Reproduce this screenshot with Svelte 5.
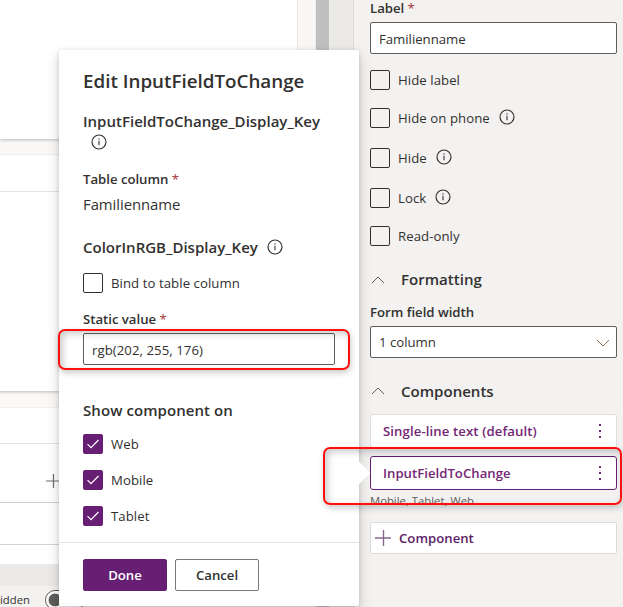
<script>
  const options = [
    { label: 'Hide label', top: 16 },
    { label: 'Hide on phone', info: true, top: 18 },
    { label: 'Hide', info: true, top: 20 },
    { label: 'Lock', info: true, top: 20 },
    { label: 'Read-only', top: 18 }
  ];
  const targets = ['Web', 'Mobile', 'Tablet'];
</script>

{#snippet info()}
  <svg class="info" width="16" height="16" viewBox="0 0 16 16">
    <circle cx="8" cy="8" r="7" fill="none" stroke="#323130" stroke-width="1.15" />
    <path d="M8 6.7V11.2" stroke="#323130" stroke-width="1.1" />
    <circle cx="8" cy="5" r=".7" fill="#323130" />
  </svg>
{/snippet}

{#snippet chevron()}
  <svg width="14" height="8" viewBox="0 0 14 8"><path d="M1 7 7 1l6 6" fill="none" stroke="#605e5c" stroke-width="1" /></svg>
{/snippet}

{#snippet dots()}
  <svg class="dots" width="4" height="16" viewBox="0 0 4 16" fill="#742774">
    <rect x="1" y="1" width="2" height="2" /><rect x="1" y="7" width="2" height="2" /><rect x="1" y="13" width="2" height="2" />
  </svg>
{/snippet}

<div class="screen">
  <div class="canvas">
    <div class="card first"></div>
    <div class="card second"><div class="head"></div></div>
    <div class="card third">
      <div class="head"></div>
      <div class="add">
        <svg width="14" height="14" viewBox="0 0 14 14"><path d="M0 7H14" stroke="#b8b6b4" stroke-width="2" /><path d="M7.5 0V14" stroke="#69676e" stroke-width="1.2" /></svg>
      </div>
      <div class="empty"></div>
    </div>
    <div class="band"></div>
    <div class="status"><span>idden</span><i class="toggle"></i></div>
  </div>
  <div class="gutter"></div>
  <div class="scroll"></div>
  <div class="gap"></div>

  <aside>
    <div class="lab">Label <b>*</b></div>
    <div class="input">Familienname</div>
    {#each options as o}
      <div class="check" style:margin-top="{o.top}px">
        <span class="box"></span><span class="opt">{o.label}</span>
        {#if o.info}{@render info()}{/if}
      </div>
    {/each}
    <div class="section">{@render chevron()}<span>Formatting</span></div>
    <div class="lab field">Form field width</div>
    <div class="input select"><span>1 column</span>
      <svg width="14" height="8" viewBox="0 0 14 8"><path d="M1 1l6 6 6-6" fill="none" stroke="#8d6a4c" stroke-width="1" /></svg>
    </div>
    <div class="section comps">{@render chevron()}<span>Components</span></div>
    <div class="comp"><span class="wide">Single-line text (default)</span>{@render dots()}</div>
    <div class="comp selected"><span>InputFieldToChange</span>{@render dots()}</div>
    <div class="caption">Mobile, Tablet, Web</div>
    <div class="new">
      <svg width="16" height="16" viewBox="0 0 16 16"><path d="M0 8H16" stroke="#a58cab" stroke-width="2" /><path d="M8.5 0V16" stroke="#8a6590" stroke-width="1.4" /></svg>
      <span>Component</span>
    </div>
  </aside>

  <section class="dialog">
    <i class="beak"></i>
    <h1>Edit InputFieldToChange</h1>
    <h2 class="key">InputFieldToChange_Display_Key</h2>
    <div class="keyinfo">{@render info()}</div>
    <div class="lab column">Table column <b>*</b></div>
    <div class="value">Familienname</div>
    <h2 class="color">ColorInRGB_Display_Key {@render info()}</h2>
    <div class="check bind"><span class="box"></span><span class="opt">Bind to table column</span></div>
    <div class="lab static">Static value <b>*</b></div>
    <div class="input rgb">rgb(202, 255, 176)</div>
    <h2 class="show">Show component on</h2>
    {#each targets as t}
      <div class="check target">
        <span class="box on"><svg width="12" height="10" viewBox="0 0 12 10"><path d="M.5 5.2 4 8.7 11.5 1" fill="none" stroke="#fff" stroke-width="1.2" /></svg></span>
        <span class="opt">{t}</span>
      </div>
    {/each}
    <footer><button class="done">Done</button><button>Cancel</button></footer>
  </section>

  <div class="mark value-mark"></div>
  <div class="mark comp-mark"></div>
</div>

<style>
  .screen {
    position: relative; display: flex; width: 623px; height: 607px; overflow: hidden;
    font: 13.2px/20px "Open Sans", "Noto Sans", sans-serif; color: #323130; background: #f3f2f1;
  }
  .screen * { box-sizing: border-box; }
  svg { display: block; flex: none; }
  .canvas { width: 297px; background: #faf9f8; display: flex; flex-direction: column; flex: none; }
  .card { background: #fff; box-shadow: 0 1px 3px rgba(0, 0, 0, .25); flex: none; }
  .first { height: 139px; }
  .second { height: 236px; margin-top: 16px; }
  .third { height: 157px; margin-top: 16px; box-shadow: none; border-top: 1px solid #f0efee; }
  .head { height: 37px; border-bottom: 1px solid #e3e2e1; }
  .third .head { height: 36px; }
  .add { height: 59px; border-bottom: 1px solid #cfcdcb; padding: 30px 0 0 46px; }
  .empty { height: 42px; border-bottom: 1px solid #d6d4d2; }
  .band { height: 22px; background: #ebeae9; flex: none; }
  .status { flex: 1; background: #f3f2f1; display: flex; font-size: 11.3px; line-height: 14px; }
  .status span { width: 45px; height: 14px; margin-top: 7px; }
  .toggle { width: 40px; height: 20px; margin-top: 4px; border: 1px solid #605e5c; border-radius: 10px; background: radial-gradient(circle at 9px 9px, #605e5c 6px, #fff 6.8px); }
  .gutter { width: 18px; background: #f8f7f6; border-left: 1px solid #e8e7e6; flex: none; }
  .scroll { width: 15px; background: #c0c0c0; border: solid #ededec; border-width: 0 1px; flex: none; }
  .gap { width: 23px; background: #ebeae9; flex: none; }
  aside { flex: 1; border-left: 1px solid #dcdbda; background: #f3f2f1; padding: 0 6px 0 16px; }
  .lab { font-weight: 600; height: 20px; line-height: 20px; white-space: nowrap; letter-spacing: -.02px; }
  .lab b { color: #a4373a; font-weight: 400; }
  aside > .lab:first-child { margin-top: -2px; }
  .input { height: 32px; margin-top: 4px; background: #fff; border: 1px solid #605e5c; border-radius: 2px; padding: 1px 8px 0; line-height: 31px; letter-spacing: -.02px; }
  .check { display: flex; height: 20px; white-space: nowrap; }
  .box { width: 20px; height: 20px; border: 1px solid #323130; border-radius: 2px; flex: none; }
  .opt { margin-left: 8px; line-height: 21px; letter-spacing: .06px; }
  .check .info { margin: 1px 0 0 9px; }
  .section { display: flex; height: 24px; margin-top: 21px; padding-left: 1px; font-size: 15.05px; font-weight: 600; line-height: 24px; }
  .section svg { margin-top: 9px; }
  .section span { margin-left: 16px; }
  .field { margin-top: 11px; }
  .select { display: flex; justify-content: space-between; margin-top: 4px; padding: 0 6px 0 8px; }
  .select svg { margin-top: 12px; }
  .comps { margin-top: 20px; line-height: 26px; }
  .comp { display: flex; justify-content: space-between; height: 34px; margin-top: 12px; padding: 0 14px 0 12px; color: #742774; font-weight: 600; line-height: 32px; background: #fff; border: 1px solid #e1dfdd; border-radius: 3px; }
  .comp .dots { margin-top: 8px; }
  .comp .wide { letter-spacing: .09px; }
  .selected { margin-top: 8px; border-color: #671f73; }
  .caption { height: 20px; margin-top: 1px; font-size: 11.3px; line-height: 20px; color: #605e5c; }
  .new { display: flex; align-items: center; height: 32px; margin-top: 11px; padding-left: 4px; border: 1px solid #dedcda; border-radius: 2px; background: #fff; color: #5c1d66; font-weight: 600; }
  .new span { margin-left: 8px; }
  .dialog { position: absolute; left: 59px; top: 50px; width: 300px; height: 556px; padding: 0 24px; background: #fff; border-radius: 2px; box-shadow: 0 6px 14px rgba(0, 0, 0, .16), 0 1px 5px rgba(0, 0, 0, .14); }
  .beak { position: absolute; right: -8px; top: 415px; width: 16px; height: 16px; background: #fff; transform: rotate(45deg); }
  h1, h2 { margin: 0; font-weight: 600; white-space: nowrap; }
  h1 { padding-top: 17px; font-size: 18.8px; line-height: 28px; }
  h2 { font-size: 15.03px; line-height: 22px; }
  .key { margin-top: 15px; }
  .keyinfo { margin: 2px 0 0 8px; }
  .column { margin-top: 19px; }
  .value { font-size: 14.9px; line-height: 22px; margin-top: 4px; height: 22px; letter-spacing: -.06px; }
  .color { display: flex; margin-top: 21px; height: 22px; line-height: 23px; }
  .color .info { margin: 3px 0 0 9px; }
  .bind { margin-top: 15px; }
  .static { margin-top: 16px; }
  .rgb { width: 252px; letter-spacing: .06px; }
  .show { margin-top: 34px; margin-bottom: -3px; letter-spacing: .06px; }
  .target { margin-top: 16px; }
  .on { display: grid; place-items: center; background: #671f73; border-color: #671f73; }
  footer { display: flex; gap: 8px; margin: 16px -24px 0; padding: 16px 24px; border-top: 1px solid #e6e5e4; }
  button { width: 84px; height: 32px; padding: 0; border: 1px solid #7a7876; border-radius: 2px; background: #fff; color: #323130; font: 600 13.2px/30px "Open Sans", sans-serif; }
  .done { background: #671f73; border-color: #671f73; color: #fff; }
  .mark { position: absolute; border: 2px solid #ff1010; border-radius: 7px; box-shadow: 1px 3px 6px rgba(0, 0, 0, .2), inset 3px 3px 7px rgba(0, 0, 0, .2); }
  .value-mark { left: 58px; top: 329px; width: 292px; height: 41px; }
  .comp-mark { left: 323px; top: 447px; width: 299px; height: 58px; }
</style>
